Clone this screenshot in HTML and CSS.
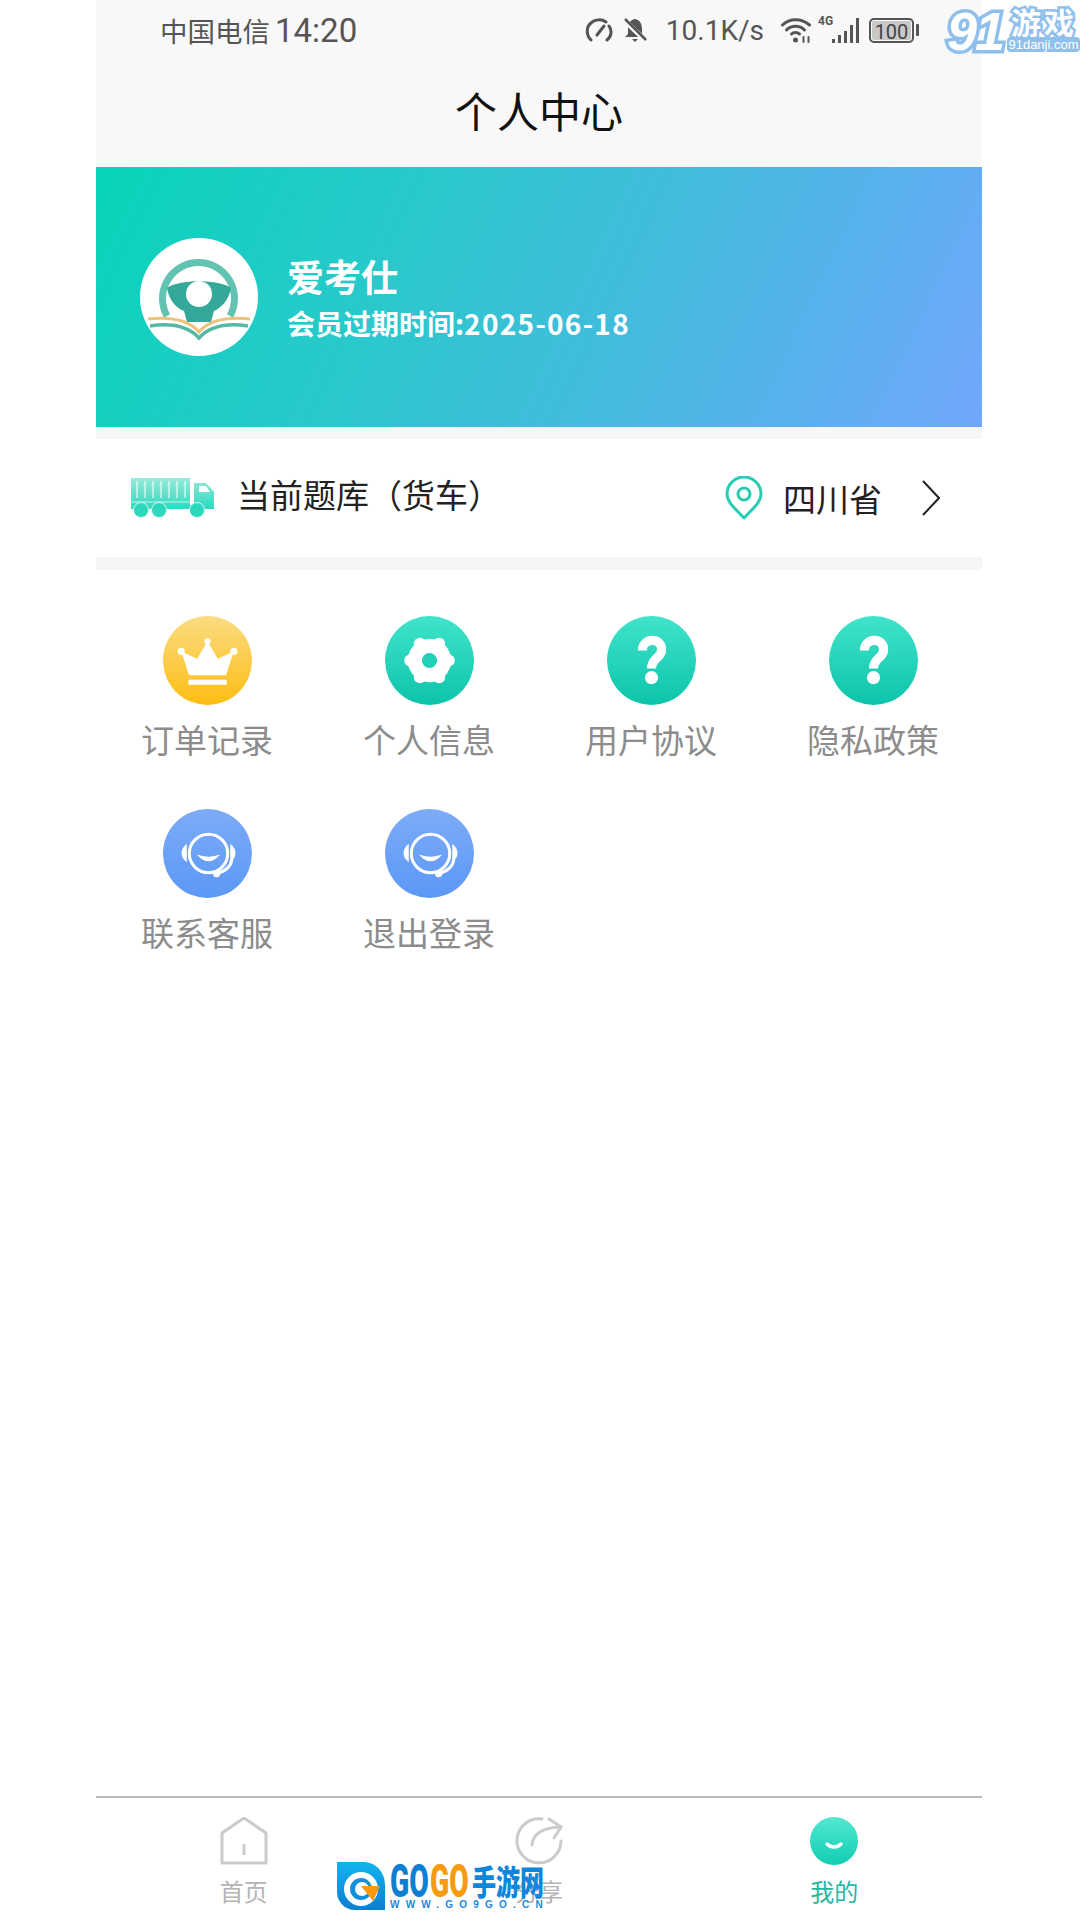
FILE: index.html
```html
<!DOCTYPE html>
<html lang="zh-CN">
<head>
    <meta charset="UTF-8">
    <title>个人中心</title>
    <link rel="stylesheet" href="styles.css">
</head>
<body>
<div class="page">

    <div class="top">
        <div class="status">
            <div class="status-left"><span>中国电信</span><span class="clock">14:20</span></div>
            <div class="status-right">
                <svg class="ic-gauge" width="28" height="24" viewBox="0 0 28 24" fill="none" stroke="#555" stroke-width="3" stroke-linecap="round">
                    <path d="M6 22C1 17 1 9 6 5 10 1 17 1 21 4"/>
                    <path d="M24 8C27 12 27 18 22 22"/>
                    <path d="M12 17L19 8"/>
                </svg>
                <svg class="ic-bell" width="24" height="24" viewBox="0 0 24 24">
                    <path d="M12 1C7 2 5 6 5 11V16L2 19H22L19 16V11C19 6 17 2 12 1Z" fill="#555"/>
                    <path d="M9 21H15L12 24Z" fill="#555"/>
                    <path d="M1 2L23 23" stroke="#f8f8f8" stroke-width="5"/>
                    <path d="M2 1L23 22" stroke="#555" stroke-width="2.5"/>
                </svg>
                <span class="speed">10.1K/s</span>
                <svg class="ic-wifi" width="31" height="26" viewBox="0 0 30 26" fill="none" stroke="#555" stroke-width="3" stroke-linecap="round">
                    <path d="M1 8C8 1 20 1 28 8"/>
                    <path d="M5 13C10 8 18 8 23 13"/>
                    <path d="M10 17C12 15 16 15 18 17"/>
                    <circle cx="14" cy="23" r="2.5" fill="#555" stroke="none"/>
                    <path d="M22 20V25M27 20V25" stroke-width="2"/>
                </svg>
                <div class="signal">
                    <span class="net">4G</span>
                    <i class="bar bar1"></i><i class="bar bar2"></i><i class="bar bar3"></i><i class="bar bar4"></i><i class="bar bar5"></i>
                </div>
                <div class="battery"><span class="battery-body">100</span><i class="battery-tip"></i></div>
            </div>
        </div>
        <div class="title">个人中心</div>
    </div>

    <div class="banner">
        <svg class="avatar" width="118" height="118" viewBox="0 0 118 118" fill="none">
            <circle cx="59" cy="59" r="59" fill="#fff"/>
            <path d="M27 78A36 36 0 1 1 90 78" stroke="#62c3b2" stroke-width="7"/>
            <path d="M27 50C38 41 80 41 91 50C89 62 81 70 74 73L71 84H47L44 73C36 70 29 62 27 50Z" fill="#34a899"/>
            <circle cx="59" cy="56" r="13" fill="#fff"/>
            <path d="M8 81C28 79 48 81 59 94C70 81 90 79 110 81" stroke="#efc27c" stroke-width="3"/>
            <path d="M10 88C30 85 48 88 59 100C70 88 88 85 108 88" stroke="#56b9a8" stroke-width="3.500"/>
        </svg>
        <div class="user">
            <div class="user-name">爱考仕</div>
            <div class="user-expire">会员过期时间:<span class="user-date">2025-06-18</span></div>
        </div>
    </div>

    <div class="bank">
        <svg class="ic-truck" width="84" height="40" viewBox="0 0 84 40">
            <defs>
                <linearGradient id="truckfill" x1="0" y1="0" x2="0" y2="1">
                    <stop offset="0" stop-color="#9aeadb"/>
                    <stop offset="1" stop-color="#2cd9bf"/>
                </linearGradient>
            </defs>
            <path d="M1 0H60V27H64V5H76L84 14V31H1Z" fill="url(#truckfill)"/>
            <path d="M7 3V20M15 3V20M23 3V20M31 3V20M39 3V20M47 3V20M55 3V20" stroke="#fff" stroke-opacity=".7" stroke-width="1.500"/>
            <path d="M1 24H60" stroke="#fff" stroke-opacity=".7" stroke-width="1"/>
            <path d="M69 8H76L80 14H69Z" fill="#fff"/>
            <g fill="#2cd9bf" stroke="#d4f7f0" stroke-width="1">
                <circle cx="11" cy="32" r="7.500"/>
                <circle cx="29" cy="32" r="7.500"/>
                <circle cx="67" cy="32" r="7.500"/>
            </g>
        </svg>
        <div class="bank-name">当前题库（货车）</div>
        <svg class="ic-pin" width="38" height="44" viewBox="0 0 38 44" fill="none" stroke="#25cdb3">
            <path d="M19 42C11 33 2 27 2 18A17 17 0 0 1 36 18C36 27 27 33 19 42Z" stroke-width="3" stroke-linejoin="round"/>
            <circle cx="19" cy="18" r="6" stroke-width="3"/>
        </svg>
        <div class="province">四川省</div>
        <svg class="ic-arrow" width="18" height="36" viewBox="0 0 18 36" fill="none" stroke="#222" stroke-width="2">
            <path d="M1 1L17 18L1 35"/>
        </svg>
    </div>

    <div class="menu">
        <div class="menu-item">
            <div class="badge yellow">
                <svg width="89" height="89" viewBox="0 0 88 88" fill="#fff">
                    <circle cx="44" cy="25" r="3"/><circle cx="18" cy="35" r="3.500"/><circle cx="70" cy="35" r="3.500"/>
                    <path d="M44 26L54 43L69 36L62 58H26L19 36L34 43Z" stroke="#fff" stroke-width="1" stroke-linejoin="round"/>
                    <rect x="25" y="63" width="38" height="5" rx="1"/>
                </svg>
            </div>
            <div class="menu-text">订单记录</div>
        </div>
        <div class="menu-item">
            <div class="badge teal">
                <svg width="89" height="89" viewBox="0 0 88 88" fill="#fff">
                    <circle cx="44" cy="44" r="21.500"/>
                    <circle cx="63" cy="44" r="6"/><circle cx="25" cy="44" r="6"/>
                    <circle cx="53.500" cy="27.500" r="6"/><circle cx="34.500" cy="27.500" r="6"/>
                    <circle cx="53.500" cy="60.500" r="6"/><circle cx="34.500" cy="60.500" r="6"/>
                    <circle cx="44" cy="44" r="7.500" fill="#20d0b9"/>
                </svg>
            </div>
            <div class="menu-text">个人信息</div>
        </div>
        <div class="menu-item">
            <div class="badge teal">
                <svg width="89" height="89" viewBox="0 0 88 88" fill="none" stroke="#fff" stroke-width="9">
                    <path d="M35 34C35 21 54 21 54 33C54 42 44 41 44 52"/>
                    <circle cx="44" cy="61" r="6.500" fill="#fff" stroke="none"/>
                </svg>
            </div>
            <div class="menu-text">用户协议</div>
        </div>
        <div class="menu-item">
            <div class="badge teal">
                <svg width="89" height="89" viewBox="0 0 88 88" fill="none" stroke="#fff" stroke-width="9">
                    <path d="M35 34C35 21 54 21 54 33C54 42 44 41 44 52"/>
                    <circle cx="44" cy="61" r="6.500" fill="#fff" stroke="none"/>
                </svg>
            </div>
            <div class="menu-text">隐私政策</div>
        </div>
        <div class="menu-item">
            <div class="badge blue">
                <svg width="89" height="89" viewBox="0 0 88 88" fill="none" stroke="#fff" stroke-width="3">
                    <circle cx="45" cy="44" r="19"/>
                    <path d="M22 38C19 41 19 46 22 49Z" fill="#fff"/>
                    <path d="M68 38C71 41 71 46 68 49Z" fill="#fff"/>
                    <path d="M68 50C67 57 61 62 53 64"/>
                    <circle cx="53" cy="64" r="3.500" fill="#fff" stroke="none"/>
                    <path d="M35 46C41 53 49 53 55 46C49 48 41 48 35 46Z" fill="#fff" stroke-width="1"/>
                </svg>
            </div>
            <div class="menu-text">联系客服</div>
        </div>
        <div class="menu-item">
            <div class="badge blue">
                <svg width="89" height="89" viewBox="0 0 88 88" fill="none" stroke="#fff" stroke-width="3">
                    <circle cx="45" cy="44" r="19"/>
                    <path d="M22 38C19 41 19 46 22 49Z" fill="#fff"/>
                    <path d="M68 38C71 41 71 46 68 49Z" fill="#fff"/>
                    <path d="M68 50C67 57 61 62 53 64"/>
                    <circle cx="53" cy="64" r="3.500" fill="#fff" stroke="none"/>
                    <path d="M35 46C41 53 49 53 55 46C49 48 41 48 35 46Z" fill="#fff" stroke-width="1"/>
                </svg>
            </div>
            <div class="menu-text">退出登录</div>
        </div>
    </div>

    <div class="tabs">
        <div class="tab">
            <svg width="48" height="48" viewBox="0 0 48 48" fill="none" stroke="#cbcbcb" stroke-width="3" stroke-linejoin="round">
                <path d="M2 16L24 1L46 16V46H2Z"/>
                <path d="M24 27V38"/>
            </svg>
            <div class="tab-text">首页</div>
        </div>
        <div class="tab">
            <svg width="48" height="48" viewBox="0 0 48 48" fill="none" stroke="#cbcbcb" stroke-width="3" stroke-linecap="round">
                <path d="M27 2A22 22 0 1 0 46 24"/>
                <path d="M17 28C18 17 27 11 44 10"/>
                <path d="M34 2L46 10L39 21"/>
            </svg>
            <div class="tab-text">分享</div>
        </div>
        <div class="tab">
            <div class="me-icon">
                <svg width="48" height="48" viewBox="0 0 48 48" fill="none" stroke="#fff" stroke-width="3.500" stroke-linecap="round">
                    <path d="M17 27C21 31 27 31 31 27"/>
                </svg>
            </div>
            <div class="tab-text active">我的</div>
        </div>
    </div>

    <!-- watermarks sit over the screenshot -->
    <div class="mark-91">
        <span class="mark-num">91</span>
        <span class="mark-name">游戏</span>
        <span class="mark-url">91danji.com</span>
    </div>

    <div class="mark-gogo">
        <svg width="48" height="48" viewBox="0 0 48 48">
            <defs>
                <linearGradient id="gogofill" x1="0" y1="0" x2="0" y2="1">
                    <stop offset="0" stop-color="#10b4ee"/>
                    <stop offset="1" stop-color="#0d7fd0"/>
                </linearGradient>
            </defs>
            <path d="M0 0H26C39 0 48 10 48 24V48H18C8 48 0 40 0 30Z" fill="url(#gogofill)"/>
            <circle cx="24" cy="27" r="17" fill="#fff"/>
            <circle cx="24" cy="27" r="11" fill="#0f8fdc"/>
            <circle cx="25" cy="27" r="7" fill="#fff"/>
            <path d="M24 24H43L36 39Z" fill="#f79a12"/>
        </svg>
        <div class="gogo-words">
            <div class="gogo-top"><span class="gogo-go">GO</span><span class="gogo-orange">GO</span><span class="gogo-cn">手游网</span></div>
            <div class="gogo-url">WWW.GO9GO.CN</div>
        </div>
    </div>

</div>
</body>
</html>
```

FILE: styles.css
```css
body {
    margin: 0;
    background-color: #fff;
    font-family: Roboto, "Noto Sans CJK SC", sans-serif;
}

.page {
    position: relative;
    height: 1920px;
    padding-left: 96px;
    display: flex;
    flex-direction: column;
    overflow: hidden;
    box-sizing: border-box;
}

.page > .top,
.page > .banner,
.page > .bank,
.page > .menu,
.page > .tabs {
    width: 886px;
    box-sizing: border-box;
}

/* status bar and title */
.top {
    height: 167px;
    background-color: #f8f8f8;
}

.status {
    height: 60px;
    padding: 0 63px 0 64px;
    display: flex;
    align-items: center;
    justify-content: space-between;
    color: #555;
    box-sizing: border-box;
}

.status-left {
    display: flex;
    align-items: center;
    gap: 5px;
    font-size: 27.500px;
    white-space: nowrap;
}

.clock {
    font-size: 33px;
}

.status-right {
    display: flex;
    align-items: center;
}

.ic-bell {
    margin-left: 10px;
}

.speed {
    margin-left: 19px;
    font-size: 28px;
}

.ic-wifi {
    margin-left: 17px;
}

.signal {
    position: relative;
    width: 41px;
    height: 26px;
    margin-left: 6px;
    display: flex;
    align-items: flex-end;
    justify-content: flex-end;
    gap: 3px;
}

.net {
    position: absolute;
    left: 0;
    top: -3px;
    font-size: 12px;
    font-weight: 700;
    line-height: 14px;
}

.bar {
    width: 3px;
    background-color: #555;
}

.bar1 { height: 4px; }
.bar2 { height: 8px; }
.bar3 { height: 12px; }
.bar4 { height: 18px; }
.bar5 { height: 25px; }

.battery {
    margin-left: 10px;
    display: flex;
    align-items: center;
    gap: 2px;
}

.battery-body {
    width: 45px;
    height: 25px;
    border: 2px solid #555;
    border-radius: 5px;
    background-color: #c8c8c8;
    background-clip: content-box;
    padding: 1px;
    font-size: 20px;
    line-height: 23px;
    text-align: center;
    box-sizing: border-box;
    color: #444;
}

.battery-tip {
    width: 3px;
    height: 12px;
    border-radius: 1px;
    background-color: #555;
}

.title {
    padding-top: 23px;
    font-size: 42px;
    line-height: 54px;
    text-align: center;
    color: #111;
    font-family: "Noto Sans CJK SC", sans-serif;
}

/* green-blue member card */
.banner {
    height: 260px;
    padding-left: 44px;
    display: flex;
    align-items: center;
    gap: 29px;
    background: linear-gradient(115deg, #08d4ba 0%, #2bc8cc 35%, #4fb5e6 72%, #72a7fc 100%);
    color: #fff;
}

.avatar {
    flex: none;
}

.user {
    font-family: "Noto Sans CJK SC", sans-serif;
    font-weight: 700;
}

.user-name {
    margin-top: -2px;
    font-size: 37px;
    line-height: 50px;
}

.user-expire {
    margin-top: 3px;
    font-size: 28px;
    line-height: 38px;
    white-space: nowrap;
}

.user-date {
    letter-spacing: 1.300px;
}

/* question bank row */
.bank {
    height: 131px;
    margin-top: 12px;
    padding: 0 42px 0 34px;
    border-bottom: 13px solid #f6f6f6;
    display: flex;
    align-items: center;
    font-family: "Noto Sans CJK SC", sans-serif;
    color: #222;
    position: relative;
}

.bank::before {
    content: "";
    position: absolute;
    left: 0;
    right: 0;
    top: -12px;
    height: 12px;
    background-color: #f6f6f6;
}

.bank-name {
    margin: 0 0 8px 23px;
    flex: 1;
    font-size: 33px;
    white-space: nowrap;
}

.province {
    margin-left: 20px;
    font-size: 33px;
}

.ic-arrow {
    margin-left: 40px;
}

/* function grid */
.menu {
    padding-top: 46px;
    display: grid;
    grid-template-columns: repeat(4, 222px);
    row-gap: 47px;
}

.menu-item {
    display: flex;
    flex-direction: column;
    align-items: center;
    gap: 11px;
}

.badge {
    width: 89px;
    height: 89px;
    border-radius: 50%;
}

.yellow { background: linear-gradient(#fbdc82, #fdbd12); }
.teal { background: linear-gradient(#40e4ca, #0cc4ab); }
.blue { background: linear-gradient(#7dabf6, #5b98f6); }

.menu-text {
    font-family: "Noto Sans CJK SC", sans-serif;
    font-size: 33px;
    line-height: 46px;
    color: #8c8c8c;
    white-space: nowrap;
}

/* bottom tabs */
.tabs {
    margin-top: auto;
    height: 124px;
    padding-top: 19px;
    border-top: 2px solid #b8b8b8;
    display: grid;
    grid-template-columns: repeat(3, 1fr);
}

.tab {
    display: flex;
    flex-direction: column;
    align-items: center;
    gap: 9px;
}

.tab-text {
    font-family: "Noto Sans CJK SC", sans-serif;
    font-size: 24px;
    line-height: 34px;
    color: #b4b4b4;
}

.tab-text.active {
    color: #24b8a2;
}

.me-icon {
    width: 48px;
    height: 48px;
    border-radius: 50%;
    background: linear-gradient(#52e8cf, #12cdb3);
}

/* watermarks */
.mark-91 {
    position: absolute;
    left: 947px;
    top: 0;
    width: 133px;
    height: 54px;
}

.mark-num {
    position: absolute;
    left: 0;
    top: 0;
    font-family: "Liberation Sans", sans-serif;
    font-size: 54px;
    font-weight: 700;
    font-style: italic;
    letter-spacing: -2px;
    color: #fff;
    -webkit-text-stroke: 7px #8fbfec;
    paint-order: stroke fill;
}

.mark-name {
    position: absolute;
    left: 64px;
    top: 0;
    font-family: "Noto Sans CJK SC", sans-serif;
    font-size: 30px;
    line-height: 43px;
    letter-spacing: 3px;
    font-weight: 700;
    color: #fff;
    -webkit-text-stroke: 5px #8fbfec;
    paint-order: stroke fill;
}

.mark-url {
    position: absolute;
    left: 60px;
    top: 37px;
    width: 73px;
    height: 15px;
    border-radius: 4px;
    background-color: #8fbfec;
    font-family: "Liberation Sans", sans-serif;
    font-size: 13px;
    line-height: 15px;
    text-align: center;
    color: #fff;
}

.mark-gogo {
    position: absolute;
    left: 337px;
    top: 1862px;
    display: flex;
    gap: 5px;
}

.gogo-words {
    width: 152px;
}

.gogo-top {
    height: 37px;
    display: flex;
    align-items: center;
    font-weight: 900;
    line-height: 36px;
}

.gogo-go,
.gogo-orange {
    width: 40px;
    font-size: 47px;
    transform: scaleX(0.6);
    transform-origin: left center;
    color: #0f7fd2;
}

.gogo-orange {
    color: #f69a0e;
}

.gogo-cn {
    margin-left: 2px;
    font-family: "Noto Sans CJK SC", sans-serif;
    font-size: 24px;
    transform: scaleY(1.4);
    color: #0d86dc;
    white-space: nowrap;
}

.gogo-url {
    font-family: "Liberation Sans", sans-serif;
    font-size: 10px;
    font-weight: 700;
    line-height: 11px;
    letter-spacing: 6.200px;
    color: #1a8ad8;
    white-space: nowrap;
}
```
